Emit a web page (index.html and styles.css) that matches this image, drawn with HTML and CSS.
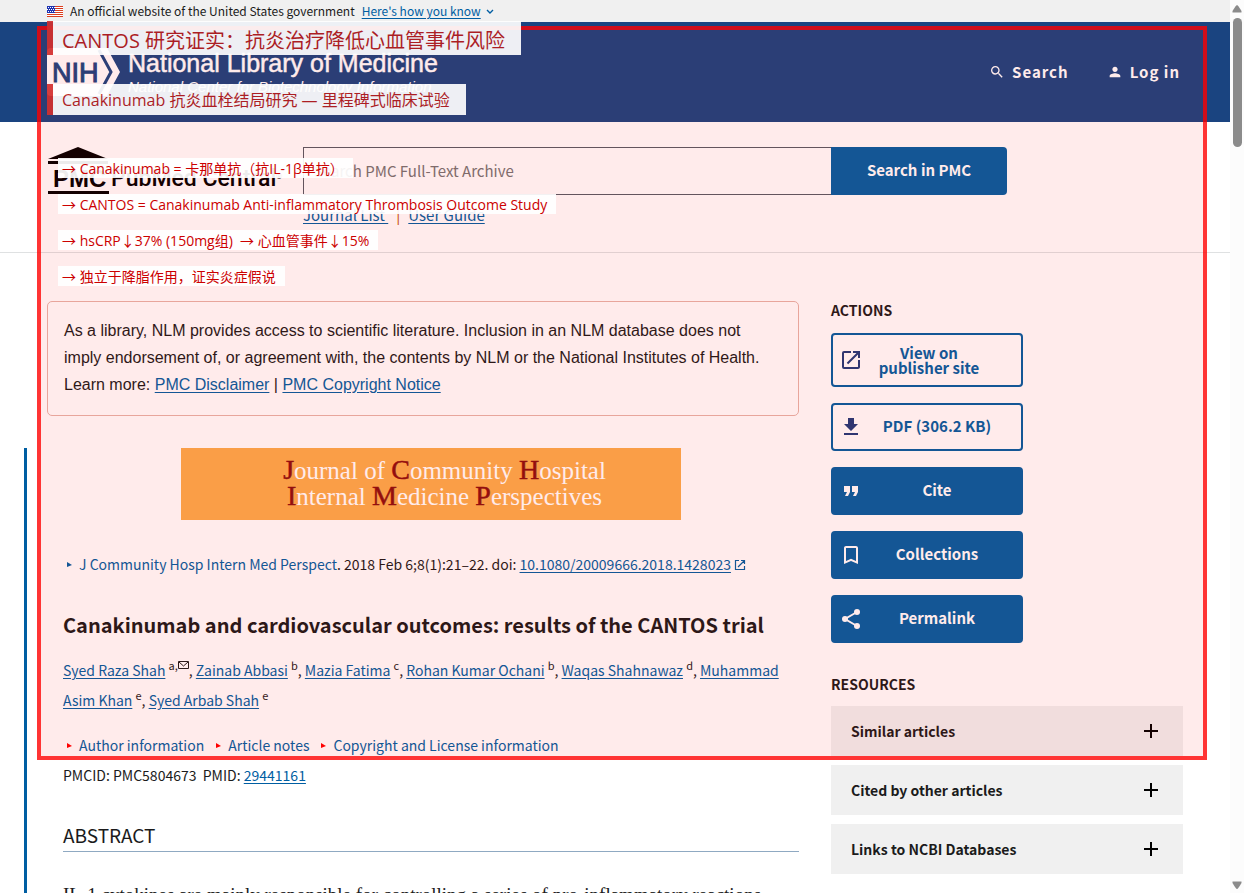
FILE: index.html
```html
<!DOCTYPE html>
<html lang="en">
<head>
<meta charset="utf-8">
<title>Canakinumab and cardiovascular outcomes: results of the CANTOS trial - PMC</title>
<link rel="stylesheet" href="styles.css">
</head>
<body>
<div class="page">
  <div class="gov-banner">
    <div class="container gov-inner">
      <svg class="flag" viewBox="0 0 16 11" width="16" height="11" aria-hidden="true">
        <rect width="16" height="11" fill="#fff"/>
        <path d="M0 .5h16M0 2.5h16M0 4.5h16M0 6.5h16M0 8.5h16M0 10.5h16" stroke="#db3e1f"/>
        <rect width="8" height="7" fill="#1e33b1"/>
        <path d="M1 1.5h7M0 3.5h8M1 5.5h7" stroke="#fff" stroke-dasharray="1 1"/>
      </svg>
      <span>An official website of the United States government</span>
      <button class="know" type="button"><span class="under">Here's how you know</span>
        <svg viewBox="0 0 8 6" width="8" height="6" aria-hidden="true"><path d="M1 1l3 3 3-3" fill="none" stroke="currentColor" stroke-width="1.4"/></svg>
      </button>
    </div>
  </div>

  <header class="nlm-header">
    <div class="container nlm-inner">
      <a class="nlm-logo" href="#">
        <svg viewBox="0 0 74 48" width="74" height="48" role="img" aria-label="NIH">
          <path d="M4 0H54L67 24 54 48H4Q0 48 0 44V4Q0 0 4 0Z" fill="#fff"/>
          <path d="M53 0H60L73 24 60 48H53L66 24Z" fill="#fff"/>
          <path d="M52 2L64 24 52 46" fill="none" stroke="#1a4480" stroke-width="3"/>
          <text class="nih" x="5" y="34">NIH</text>
        </svg>
        <span class="nlm-words">
          <span class="nlm-name">National Library of Medicine</span>
          <span class="nlm-sub">National Center for Biotechnology Information</span>
        </span>
      </a>
      <nav class="nlm-nav">
        <a href="#"><svg viewBox="0 0 24 24" width="16" height="16" aria-hidden="true"><path fill="currentColor" d="M15.5 14h-.79l-.28-.27A6.47 6.47 0 0 0 16 9.5 6.5 6.5 0 1 0 9.5 16c1.61 0 3.09-.59 4.23-1.57l.27.28v.79l5 4.99L20.49 19l-4.99-5zm-6 0C7.01 14 5 11.99 5 9.5S7.01 5 9.5 5 14 7.01 14 9.5 11.99 14 9.5 14z"/></svg>Search</a>
        <a href="#"><svg viewBox="0 0 24 24" width="16" height="16" aria-hidden="true"><path fill="currentColor" d="M12 12c2.21 0 4-1.79 4-4s-1.79-4-4-4-4 1.79-4 4 1.79 4 4 4zm0 2c-2.67 0-8 1.34-8 4v2h16v-2c0-2.66-5.33-4-8-4z"/></svg>Log in</a>
      </nav>
    </div>
  </header>

  <section class="pmc-bar">
    <div class="container pmc-inner">
      <a class="pmc-logo" href="#">
        <svg viewBox="0 0 236 48" width="236" height="48" role="img" aria-label="PMC PubMed Central">
          <path d="M1 12L31 0 61 12Z" fill="#000"/>
          <path d="M1 15.5H61M1 45.5H62" stroke="#000" stroke-width="3"/>
          <text class="pmc-mark" x="6" y="40">PMC</text>
          <text class="pmc-name" x="64" y="39">PubMed Central</text>
          <text class="pmc-reg" x="229" y="32">®</text>
        </svg>
      </a>
      <div class="pmc-search">
        <form class="search-form">
          <input type="search" aria-label="Search PMC" placeholder="Search PMC Full-Text Archive">
          <button type="button">Search in PMC</button>
        </form>
        <div class="search-links"><a href="#">Journal List </a><span class="sep">|</span><a href="#">User Guide</a></div>
      </div>
    </div>
  </section>

  <div class="container columns">
    <main class="main-col">
      <section class="disclaimer">
        As a library, NLM provides access to scientific literature. Inclusion in an NLM database does not imply endorsement of, or agreement with, the contents by NLM or the National Institutes of Health.<br>
        Learn more: <a href="#">PMC Disclaimer</a> | <a href="#">PMC Copyright Notice</a>
      </section>
      <article class="article">
        <div class="journal">
          <div><b>J</b>ournal of <b>C</b>ommunity <b>H</b>ospital</div>
          <div><b>I</b>nternal <b>M</b>edicine <b>P</b>erspectives</div>
        </div>
        <p class="citation"><button class="toggle blue" type="button">J Community Hosp Intern Med Perspect</button>. 2018 Feb 6;8(1):21–22. doi: <a href="#">10.1080/20009666.2018.1428023</a> <svg class="ext" viewBox="0 0 12 12" width="12" height="12" aria-hidden="true"><path d="M5 1.5H1.5v9h9V7M7 1.5h3.5V5M10.500 1.500L4 8" fill="none" stroke="currentColor" stroke-width="1.200"/></svg></p>
        <h1>Canakinumab and cardiovascular outcomes: results of the CANTOS trial</h1>
        <p class="authors"><a href="#">Syed Raza Shah</a> <sup>a,<svg viewBox="0 0 11 9" width="11" height="9" aria-hidden="true"><path d="M.5.500h10v7H.5zM1 1l4.500 4L10 1" fill="none" stroke="currentColor"/></svg></sup>, <a href="#">Zainab Abbasi</a> <sup>b</sup>, <a href="#">Mazia Fatima</a> <sup>c</sup>, <a href="#">Rohan Kumar Ochani</a> <sup>b</sup>, <a href="#">Waqas Shahnawaz</a> <sup>d</sup>, <a href="#">Muhammad Asim Khan</a> <sup>e</sup>, <a href="#">Syed Arbab Shah</a> <sup>e</sup></p>
        <div class="info">
          <button class="toggle" type="button">Author information</button>
          <button class="toggle" type="button">Article notes</button>
          <button class="toggle" type="button">Copyright and License information</button>
        </div>
        <p class="ids">PMCID: PMC5804673&nbsp; PMID: <a href="#">29441161</a></p>
        <h2>ABSTRACT</h2>
        <p class="abstract">IL-1 cytokines are mainly responsible for controlling a series of pro-inflammatory reactions</p>
      </article>
    </main>

    <aside class="side">
      <h3>ACTIONS</h3>
      <div class="actions">
        <a class="action outline tall" href="#"><svg viewBox="0 0 24 24" width="24" height="24" aria-hidden="true"><path fill="currentColor" d="M19 19H5V5h7V3H5a2 2 0 0 0-2 2v14a2 2 0 0 0 2 2h14c1.100 0 2-.9 2-2v-7h-2v7zM14 3v2h3.590l-9.830 9.830 1.410 1.410L19 6.410V10h2V3h-7z"/></svg><span>View on<br>publisher site</span></a>
        <a class="action outline" href="#"><svg viewBox="0 0 24 24" width="24" height="24" aria-hidden="true"><path fill="currentColor" d="M19 9h-4V3H9v6H5l7 7 7-7zM5 18v2h14v-2H5z"/></svg><span>PDF (306.2 KB)</span></a>
        <button class="action" type="button"><svg viewBox="0 0 24 24" width="24" height="24" aria-hidden="true"><path fill="currentColor" d="M6 17h3l2-4V7H5v6h3zm8 0h3l2-4V7h-6v6h3z"/></svg><span>Cite</span></button>
        <button class="action" type="button"><svg viewBox="0 0 24 24" width="24" height="24" aria-hidden="true"><path fill="currentColor" d="M17 3H7c-1.100 0-2 .9-2 2v16l7-3 7 3V5c0-1.100-.9-2-2-2zm0 15l-5-2.180L7 18V5h10v13z"/></svg><span>Collections</span></button>
        <button class="action" type="button"><svg viewBox="0 0 24 24" width="24" height="24" aria-hidden="true"><path d="M18 5L6 12l12 7" fill="none" stroke="currentColor" stroke-width="2"/><circle cx="18" cy="5" r="3" fill="currentColor"/><circle cx="6" cy="12" r="3" fill="currentColor"/><circle cx="18" cy="19" r="3" fill="currentColor"/></svg><span>Permalink</span></button>
      </div>
      <h3>RESOURCES</h3>
      <div class="resources">
        <button type="button">Similar articles<svg viewBox="0 0 14 14" width="14" height="14" aria-hidden="true"><path d="M7 0v14M0 7h14" stroke="#000" stroke-width="2"/></svg></button>
        <button type="button">Cited by other articles<svg viewBox="0 0 14 14" width="14" height="14" aria-hidden="true"><path d="M7 0v14M0 7h14" stroke="#000" stroke-width="2"/></svg></button>
        <button type="button">Links to NCBI Databases<svg viewBox="0 0 14 14" width="14" height="14" aria-hidden="true"><path d="M7 0v14M0 7h14" stroke="#000" stroke-width="2"/></svg></button>
      </div>
    </aside>
  </div>
</div>

<div class="scrollbar" aria-hidden="true">
  <svg viewBox="0 0 10 8" width="10" height="8"><path d="M5 0Q6 0 9.500 6V7.500H.5V6Q4 0 5 0Z" fill="#8b8b8b"/></svg>
  <div class="thumb"></div>
  <svg class="down" viewBox="0 0 10 8" width="10" height="8"><path d="M5 8Q6 8 9.500 2V.5H.5V2Q4 8 5 8Z" fill="#8b8b8b"/></svg>
</div>

<div class="highlight"></div>
<div class="label label-title" lang="zh-CN">CANTOS 研究证实：抗炎治疗降低心血管事件风险</div>
<div class="label label-subtitle" lang="zh-CN">Canakinumab 抗炎血栓结局研究 — 里程碑式临床试验</div>
<div class="notes" lang="zh-CN">
  <div class="note">→ Canakinumab = 卡那单抗（抗IL-1β单抗）</div>
  <div class="note">→ CANTOS = Canakinumab Anti-inflammatory Thrombosis Outcome Study</div>
  <div class="note">→ hsCRP↓37% (150mg组) &nbsp;→ 心血管事件↓15%</div>
  <div class="note">→ 独立于降脂作用，证实炎症假说</div>
</div>
</body>
</html>
```
FILE: styles.css
```css
* { box-sizing: border-box; }
body {
  margin: 0;
  height: 100vh;
  overflow: hidden;
  display: flex;
  position: relative;
  background: #fff;
  color: #1b1b1b;
  font-family: "Noto Sans CJK SC", sans-serif;
  font-size: 14px;
}
a { color: #005ea2; text-underline-offset: 2px; }
button { font: inherit; border: 0; margin: 0; cursor: pointer; }
p, h1, h2, h3 { margin: 0; }
.page { flex: 1; min-width: 0; overflow: hidden; }
.container { max-width: 1200px; margin: 0 auto; padding: 0 32px; }

.gov-banner { background: #f0f0f0; font-size: 12px; line-height: 22px; }
.gov-inner { display: flex; align-items: center; height: 22px; }
.flag { margin-right: 7px; }
.know { background: none; color: #005ea2; padding: 0; margin-left: 7px; font-size: 12px; line-height: 20px; }
.under { text-decoration: underline; text-underline-offset: 2px; margin-right: 3px; }
.know svg { vertical-align: 1px; }

.nlm-header { background: #1a4480; }
.nlm-inner { height: 100px; display: flex; justify-content: space-between; align-items: center; }
.nlm-logo { display: flex; gap: 7px; color: #fff; text-decoration: none; font-family: "Liberation Sans", Arial, sans-serif; }
.nih { font: 27px "Liberation Sans", Arial, sans-serif; fill: #1a4480; stroke: #1a4480; stroke-width: 1px; }
.nlm-words { display: flex; flex-direction: column; padding-top: 1px; }
.nlm-name { font-size: 25px; line-height: 29px; -webkit-text-stroke: 0.5px #fff; }
.nlm-sub { font-size: 15px; line-height: 18px; font-style: italic; }
.nlm-nav { display: flex; gap: 38px; padding-right: 3px; }
.nlm-nav a { display: flex; align-items: center; gap: 7px; color: #fff; text-decoration: none; font-weight: 700; font-size: 15px; line-height: 20px; letter-spacing: 1px; }

.pmc-bar { border-bottom: 1px solid #dfe1e2; }
.pmc-inner { display: flex; height: 130px; padding-top: 25px; }
.pmc-logo { width: 256px; }
.pmc-mark { font: 700 24px "Liberation Sans", Arial, sans-serif; }
.pmc-name { font: 500 23px Roboto, sans-serif; }
.pmc-reg { font: 8px Roboto, sans-serif; }
.search-form { display: flex; width: 704px; }
.search-form input { flex: 1; height: 48px; border: 1px solid #565c65; border-right: 0; border-radius: 0; background: #fff; padding: 0 8px 2px 10px; font: 15px "Noto Sans CJK SC", sans-serif; }
.search-form input::placeholder { color: #757575; }
.search-form button { width: 176px; padding: 0 0 3px; background: #005ea2; color: #fff; font-weight: 700; font-size: 15px; border-radius: 0 4px 4px 0; }
.search-links { padding-top: 10px; font-size: 15px; line-height: 20px; }
.search-links a { white-space: pre; }
.sep { color: #c05600; margin: 0 8px; }

.columns { display: flex; gap: 32px; padding-top: 48px; }
.main-col { flex: 1; min-width: 0; }
.disclaimer { border: 1px solid #e6b3a9; border-radius: 5px; padding: 15px 16px 17px; font: 16px/27px "Liberation Sans", Arial, sans-serif; }
.article { margin: 32px 0 0 -23px; border-left: 3px solid #005ea2; padding-left: 36px; height: 500px; }
.journal { width: 500px; height: 72px; margin: 0 auto; background: #faac4e; color: #fff; padding: 9px 0 0 27px; text-align: center; font: 25px/26px "Liberation Serif", serif; }
.journal div { height: 26px; }
.journal b { font-weight: 400; color: #8b1010; font-size: 28px; line-height: 26px; -webkit-text-stroke: 0.5px #8b1010; }
.citation { margin-top: 29px; line-height: 30px; }
.toggle { background: none; color: #005ea2; padding: 0; }
.toggle::before { content: ""; display: inline-block; margin: 0 7px 3px 4px; border-left: 5px solid #f00; border-top: 3px solid transparent; border-bottom: 2px solid transparent; }
.toggle.blue::before { border-left-color: #005ea2; }
.ext { color: #005ea2; vertical-align: -1px; }
h1 { margin-top: 30px; font-size: 20px; line-height: 32px; font-weight: 700; }
.authors { margin-top: 14px; line-height: 30px; }
.authors sup { font-size: 11px; line-height: 0; vertical-align: 6px; }
.info { margin-top: 15px; display: flex; gap: 8px; line-height: 30px; }
.ids { line-height: 30px; }
h2 { margin-top: 29px; border-bottom: 1px solid #8fa9c2; font-weight: 400; font-size: 19px; line-height: 32px; }
.abstract { margin-top: 28px; font: 19px/30px "Liberation Serif", serif; white-space: nowrap; }

.side { width: 352px; }
h3 { font-size: 14px; line-height: 18px; font-weight: 700; }
.actions { display: flex; flex-direction: column; gap: 16px; width: 192px; margin: 14px 0 32px; }
.action { display: flex; align-items: center; min-height: 48px; padding: 0 10px 0 6px; border: 2px solid #005ea2; border-radius: 4px; background: #005ea2; color: #fff; text-decoration: none; font-weight: 700; font-size: 15px; line-height: 15px; text-align: center; }
.action span { flex: 1; padding-bottom: 3px; }
.outline { background: #fff; color: #005ea2; }
.outline svg { color: #1f3a7a; }
.tall { min-height: 54px; padding-right: 26px; }
.tall span { padding-bottom: 0; }
.resources { display: flex; flex-direction: column; gap: 9px; margin-top: 13px; }
.resources button { display: flex; justify-content: space-between; align-items: center; height: 50px; background: #f0f0f0; color: #1b1b1b; font-weight: 700; padding: 0 25px 0 20px; }

.scrollbar { width: 14px; background: #fcfcfc; display: flex; flex-direction: column; align-items: center; padding: 5px 0 4px; }
.thumb { width: 9px; height: 129px; margin-top: 5px; border-radius: 5px; background: #8b8b8b; }
.down { margin-top: auto; }

/* Annotation layer drawn over the page */
.highlight { position: absolute; left: 37px; right: 37px; top: 26px; height: 734px; border: 4px solid rgba(255, 0, 0, 0.78); background: rgba(255, 0, 0, 0.08); }
.label, .notes { font-family: "Open Sans", "Noto Sans CJK SC", sans-serif; white-space: nowrap; }
.label { position: absolute; left: 47px; border-left: 6px solid #d32f2f; background: #fff; color: #b71c1c; opacity: 0.92; }
.label-title { top: 21px; padding: 5px 16px 0 9px; font-size: 20px; line-height: 29px; }
.label-subtitle { top: 84px; padding: 4px 16px 3px 9px; font-size: 16px; line-height: 24px; }
.notes { position: absolute; left: 58px; top: 158px; display: flex; flex-direction: column; align-items: flex-start; gap: 16px; }
.note { background: rgba(255, 255, 255, 0.92); color: #c00; padding: 1px 9px 0 4px; font-size: 14px; line-height: 19px; }
```
